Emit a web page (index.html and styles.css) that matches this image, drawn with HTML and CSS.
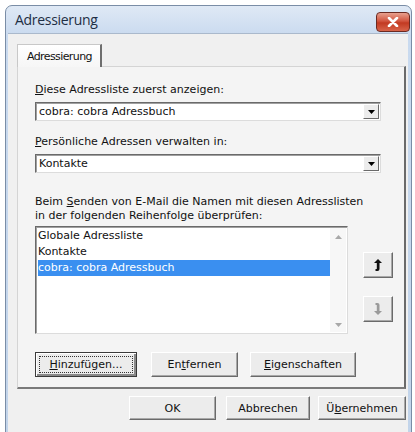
FILE: index.html
```html
<!DOCTYPE html>
<html lang="de">
<head>
<meta charset="utf-8">
<title>Adressierung</title>
<link rel="stylesheet" href="styles.css">
</head>
<body>
<div class="window">
  <div class="titlebar">
    <span class="title">Adressierung</span>
    <span class="close"><svg width="12" height="10" viewBox="0 0 12 10"><path d="M2 1 L10 9 M10 1 L2 9" stroke="#fff" stroke-width="2.6" stroke-linecap="round"/></svg></span>
  </div>
  <div class="client">
    <div class="tabs"><span class="tab">Adressierung</span></div>
    <div class="panel">
      <div class="label"><u>D</u>iese Adressliste zuerst anzeigen:</div>
      <div class="combo">
        <span class="combo-text">cobra: cobra Adressbuch</span>
        <span class="drop"><svg width="7" height="4" viewBox="0 0 7 4"><path d="M0 0 H7 L3.5 4 Z" fill="#000"/></svg></span>
      </div>
      <div class="label gap-top"><u>P</u>ersönliche Adressen verwalten in:</div>
      <div class="combo">
        <span class="combo-text">Kontakte</span>
        <span class="drop"><svg width="7" height="4" viewBox="0 0 7 4"><path d="M0 0 H7 L3.5 4 Z" fill="#000"/></svg></span>
      </div>
      <div class="label para">Beim <u>S</u>enden von E-Mail die Namen mit diesen Adresslisten<br>in der folgenden Reihenfolge überprüfen:</div>
      <div class="list-row">
        <div class="listbox">
          <div class="items">
            <div class="item">Globale Adressliste</div>
            <div class="item">Kontakte</div>
            <div class="item selected">cobra: cobra Adressbuch</div>
          </div>
          <div class="scrollbar">
            <svg width="7" height="4" viewBox="0 0 7 4"><path d="M0 4 H7 L3.5 0 Z" fill="#a8a8a8"/></svg>
            <svg width="7" height="4" viewBox="0 0 7 4"><path d="M0 0 H7 L3.5 4 Z" fill="#a8a8a8"/></svg>
          </div>
        </div>
        <div class="move-col">
          <button class="btn move"><svg width="10" height="14" viewBox="0 0 10 14"><path d="M5 1 L9 5 H6.5 V11 Q6.5 13 4.5 13 H2.5 V11 H3.8 V5 H1 Z" fill="#111"/></svg></button>
          <button class="btn move down"><svg width="10" height="14" viewBox="0 0 10 14"><path d="M5 13 L9 9 H6.5 V3 Q6.5 1 4.5 1 H2.5 V3 H3.8 V9 H1 Z" fill="#9a9a9a"/></svg></button>
        </div>
      </div>
      <div class="btn-row">
        <button class="btn default"><span class="focus"><u>H</u>inzufügen...</span></button>
        <button class="btn w-ent">En<u>t</u>fernen</button>
        <button class="btn w-eig"><u>E</u>igenschaften</button>
      </div>
    </div>
    <div class="dlg-row">
      <button class="btn w-ok">OK</button>
      <button class="btn w-abb">Abbrechen</button>
      <button class="btn w-ueb">Ü<u>b</u>ernehmen</button>
    </div>
  </div>
</div>
</body>
</html>
```
FILE: styles.css
```css
html, body {
  margin: 0;
  padding: 0;
  background: #ffffff;
}
body {
  width: 415px;
  height: 432px;
  overflow: hidden;
}
.window {
  margin: 5px 0 0 5px;
  width: 405px;
  height: 440px;
  border: 1px solid #7a8da6;
  border-radius: 7px 7px 0 0;
  background: linear-gradient(#dfe9f5, #c9daef 30px, #c2d4ea);
  display: flex;
  flex-direction: column;
}
.titlebar {
  height: 27px;
  display: flex;
  align-items: center;
  justify-content: space-between;
  padding-left: 9px;
  padding-right: 1px;
}
.title {
  font-family: "Open Sans", "Liberation Sans", sans-serif;
  font-size: 14px;
  color: #1e2e44;
  letter-spacing: -0.3px;
}
.close {
  width: 34px;
  height: 20px;
  margin-top: 4px;
  border: 1px solid #6b2a22;
  border-radius: 4px;
  background: linear-gradient(#e8a08e, #d2553f 45%, #c23a22 55%, #d8644a);
  display: flex;
  align-items: center;
  justify-content: center;
  box-sizing: border-box;
}
.client {
  flex: 1;
  margin: 0 3px 0 2px;
  background: #f0f0f0;
  border-top: 1px solid #aab9cc;
  padding: 10px 2px 0 9px;
  font-family: "DejaVu Sans", "Liberation Sans", sans-serif;
  font-size: 11px;
  color: #111;
}
.tabs {
  height: 22px;
  display: flex;
  position: relative;
  z-index: 1;
}
.tab {
  display: flex;
  align-items: center;
  padding: 0 8px 0 9px;
  height: 23px;
  box-sizing: border-box;
  border: 1px solid #c8c8c8;
  border-right: 2px solid #6e6e6e;
  border-bottom: none;
  background: linear-gradient(#ffffff, #f6f6f6);
  letter-spacing: -0.6px;
}
.panel {
  border: 1px solid #d4d4d4;
  border-right: 2px solid #6a6a6a;
  border-bottom: 2px solid #7a7a7a;
  background: #f4f4f4;
  padding: 16px 0 11px 17px;
  height: 323px;
  box-sizing: border-box;
}
.label {
  line-height: 14px;
  height: 14px;
  white-space: nowrap;
}
.gap-top {
  margin-top: 14px;
}
.para {
  margin-top: 22px;
  height: 28px;
}
.combo {
  margin-top: 5px;
  width: 346px;
  height: 19px;
  box-sizing: border-box;
  background: #fff;
  border: 1px solid;
  border-color: #6a6a6a #dcdcdc #dcdcdc #6a6a6a;
  box-shadow: inset 1px 1px 0 #a0a0a0;
  display: flex;
  align-items: center;
  justify-content: space-between;
  padding: 0 1px 0 3px;
}
.combo-text {
  line-height: 15px;
}
.drop {
  width: 16px;
  height: 15px;
  box-sizing: border-box;
  background: #ececec;
  border: 1px solid;
  border-color: #fff #6a6a6a #6a6a6a #fff;
  display: flex;
  align-items: center;
  justify-content: center;
}
.list-row {
  margin-top: 3px;
  display: flex;
  align-items: flex-start;
}
.listbox {
  width: 313px;
  height: 108px;
  box-sizing: border-box;
  background: #fff;
  border: 1px solid;
  border-color: #6a6a6a #dcdcdc #dcdcdc #6a6a6a;
  box-shadow: inset 1px 1px 0 #a0a0a0;
  display: flex;
  padding: 1px 1px 1px 2px;
}
.items {
  flex: 1;
}
.item {
  height: 16px;
  line-height: 16px;
}
.item.selected {
  background: #3a8ff0;
  color: #fff;
}
.scrollbar {
  width: 16px;
  background: #f7f7f7;
  display: flex;
  flex-direction: column;
  align-items: center;
  justify-content: space-between;
  padding: 7px 0 5px;
  box-sizing: border-box;
}
.move-col {
  margin-left: 15px;
  margin-top: 26px;
  display: flex;
  flex-direction: column;
  gap: 18px;
}
.btn {
  font-family: "DejaVu Sans", "Liberation Sans", sans-serif;
  font-size: 11px;
  color: #111;
  background: #ececec;
  border: 1px solid;
  border-color: #ffffff #6a6a6a #6a6a6a #ffffff;
  box-shadow: inset -1px -1px 0 #a8a8a8;
  padding: 0;
  margin: 0;
  height: 25px;
  box-sizing: border-box;
  display: flex;
  align-items: center;
  justify-content: center;
}
.move {
  width: 30px;
  height: 26px;
}
.btn-row {
  margin-top: 18px;
  display: flex;
}
.default {
  width: 102px;
  border: 1px solid #3a3a3a;
  box-shadow: inset 1px 1px 0 #fff, inset -2px -2px 0 #8a8a8a;
  padding: 3px;
}
.focus {
  flex: 1;
  align-self: stretch;
  border: 1px dotted #333;
  display: flex;
  align-items: center;
  justify-content: center;
}
.w-ent {
  width: 87px;
  margin-left: 14px;
}
.w-eig {
  width: 106px;
  margin-left: 12px;
}
.dlg-row {
  margin-top: 7px;
  display: flex;
  justify-content: flex-end;
}
.dlg-row .btn {
  height: 24px;
}
.w-ok {
  width: 87px;
}
.w-abb {
  width: 84px;
  margin-left: 10px;
}
.w-ueb {
  width: 88px;
  margin-left: 8px;
}
```
